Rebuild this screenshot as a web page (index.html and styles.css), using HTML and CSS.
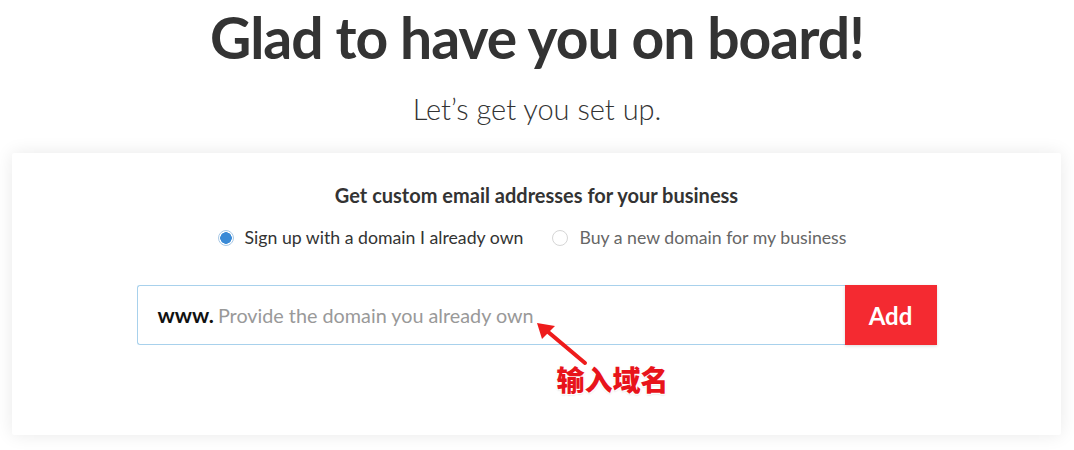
FILE: index.html
```html
<!DOCTYPE html>
<html lang="en">
<head>
<meta charset="utf-8">
<title>Glad to have you on board!</title>
<link rel="stylesheet" href="styles.css">
</head>
<body>
  <header class="hero">
    <h1 class="hero-title">Glad to have you on board!</h1>
    <p class="hero-sub">Let’s get you set up.</p>
  </header>
  <main class="card">
    <h2 class="card-title">Get custom email addresses for your business</h2>
    <div class="options">
      <label class="option option-active"><span class="radio radio-on"></span>Sign up with a domain I already own</label>
      <label class="option"><span class="radio"></span>Buy a new domain for my business</label>
    </div>
    <div class="domain-row">
      <div class="domain-input">
        <span class="prefix">www.</span>
        <span class="placeholder">Provide the domain you already own</span>
      </div>
      <button class="add-btn">Add</button>
      <svg class="note-arrow" width="70" height="60" viewBox="0 0 70 60">
        <line x1="52" y1="48" x2="14" y2="16" stroke="#ee1c1c" stroke-width="4" stroke-linecap="round"/>
        <polygon points="4,8 22,11 9,24" fill="#ee1c1c"/>
      </svg>
      <span class="note-text">输入域名</span>
    </div>
  </main>
</body>
</html>
```
FILE: styles.css
```css
* { box-sizing: border-box; }
html, body { margin: 0; padding: 0; background: #fff; }
body {
  font-family: Lato, "Noto Sans", sans-serif;
  color: #333;
  width: 1074px;
  height: 450px;
  overflow: hidden;
}
.hero { text-align: center; padding-top: 3px; }
.hero-title {
  margin: 0;
  font-size: 57px;
  font-weight: 700;
  line-height: 1.2;
  color: #333;
  letter-spacing: -1px;
}
.hero-sub {
  margin: 21px 0 0;
  font-size: 29px;
  font-weight: 300;
  line-height: 1.2;
  color: #333;
}
.card {
  margin: 26px 13px 0 12px;
  height: 282px;
  background: #fff;
  box-shadow: 0 0 18px rgba(0,0,0,0.09);
  border-radius: 2px;
  padding-top: 30px;
  display: flex;
  flex-direction: column;
  align-items: center;
}
.card-title {
  margin: 0;
  font-size: 20px;
  font-weight: 700;
  line-height: 1.2;
  color: #333;
}
.options {
  margin-top: 20px;
  margin-right: 9px;
  display: flex;
  gap: 29px;
  font-size: 17.7px;
  line-height: 1.2;
}
.option { display: flex; align-items: center; gap: 11px; color: #666; }
.option-active { color: #333; }
.radio {
  width: 16px; height: 16px;
  border-radius: 50%;
  border: 1px solid #d6d6d6;
  background: #fff;
  display: inline-block;
}
.radio-on {
  border-color: #a9c9e6;
  background: radial-gradient(circle, #3a8ad6 0 5.5px, #fff 6px);
}
.domain-row {
  margin-top: 37px;
  display: flex;
  position: relative;
  width: 800px;
}
.domain-input {
  flex: 1;
  height: 60px;
  border: 1px solid #a8d1ec;
  border-right: none;
  border-radius: 3px 0 0 3px;
  display: flex;
  align-items: center;
  padding-left: 20px;
  gap: 4px;
}
.prefix { font-size: 21.5px; font-weight: 700; color: #111; }
.placeholder { font-size: 19.8px; color: #999; }
.add-btn {
  width: 92px;
  height: 60px;
  border: none;
  background: #f42a31;
  color: #fff;
  font-family: Lato, sans-serif;
  font-size: 24px;
  font-weight: 700;
  padding: 0;
  box-shadow: 0 1px 3px rgba(0,0,0,0.15);
}
.note-arrow { position: absolute; left: 396px; top: 30px; }
.note-text {
  position: absolute;
  left: 420px;
  top: 78px;
  font-family: "Noto Sans CJK SC", sans-serif;
  font-size: 28px;
  font-weight: 900;
  color: #e8141b;
  line-height: 1.2;
  text-shadow: 1px 1px 0 #fff, -1px -1px 0 #fff, 1px -1px 0 #fff, -1px 1px 0 #fff, 0 1px 2px rgba(0,0,0,0.25);
}
```
